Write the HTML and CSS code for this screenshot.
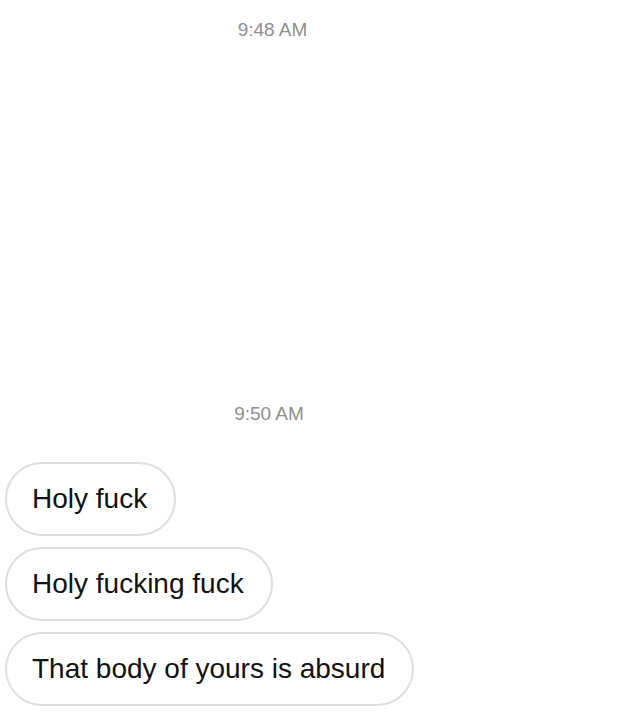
FILE: index.html
```html
<!DOCTYPE html>
<html lang="en">

<head>
  <meta charset="UTF-8">
  <meta name="viewport" content="width=device-width, initial-scale=1.0">
  <title>Messages</title>
  <link rel="stylesheet" href="styles.css">
</head>

<body>
  <div class="thread">
    <div class="time first">9:48 AM</div>

    <!-- shared photo, blank -->
    <div class="photo-row">
      <div class="photo"></div>
    </div>

    <div class="time second">9:50 AM</div>

    <div class="messages">
      <div class="bubble">Holy fuck</div>
      <div class="bubble">Holy fucking fuck</div>
      <div class="bubble">That body of yours is absurd</div>
    </div>
  </div>
</body>

</html>
```

FILE: styles.css
```css
body {
  margin: 0;
  background: #fff;
  font-family: "Liberation Sans", Arial, sans-serif;
  color: #111;
  overflow: hidden;
}

.thread {
  padding-top: 18px;
}

/* Timestamps */
.time {
  font-size: 19px;
  line-height: 24px;
  color: #8e8e8e;
  text-align: center;
  padding-right: 90px;
}

.time.second {
  padding-right: 97px;
}

/* Photo message (blank) */
.photo-row {
  display: flex;
  justify-content: flex-end;
  height: 360px;
}

.photo {
  width: 275px;
  height: 100%;
  margin-right: 8px;
  border-radius: 22px;
  background: #fff;
}

/* Message bubbles */
.messages {
  display: flex;
  flex-direction: column;
  align-items: flex-start;
  gap: 11px;
  margin-top: 36px;
  padding-left: 5px;
}

.bubble {
  border: 2px solid #dedede;
  border-radius: 37px;
  padding: 0 27px 0 25px;
  font-size: 28px;
  line-height: 70px;
  white-space: nowrap;
}
```
